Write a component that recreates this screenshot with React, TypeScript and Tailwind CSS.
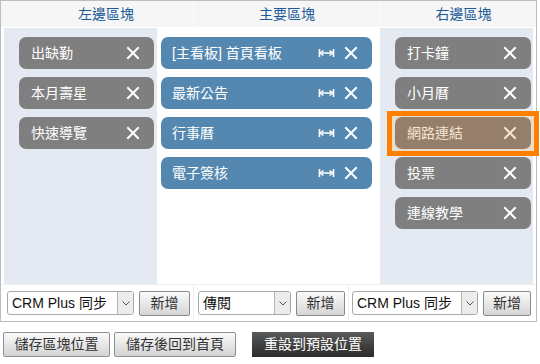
import React from 'react';

const font = { fontFamily: '"Liberation Sans", "Noto Sans CJK TC", sans-serif' };

function XIcon({ color = '#fff' }: { color?: string }) {
  return (
    <svg width="14" height="14" viewBox="0 0 14 14" className="shrink-0">
      <path d="M2 2 L12 12 M12 2 L2 12" stroke={color} strokeWidth="2" strokeLinecap="square" />
    </svg>
  );
}

function WidthIcon() {
  return (
    <svg width="17" height="12" viewBox="0 0 17 12" className="shrink-0">
      <path d="M1.5 2 V10 M15.5 2 V10 M2 6 H15" stroke="#fff" strokeWidth="1.6" />
      <path d="M2 6 L5.5 3.5 M2 6 L5.5 8.5 M15 6 L11.5 3.5 M15 6 L11.5 8.5" stroke="#fff" strokeWidth="1.4" />
    </svg>
  );
}

function SideItem({ label }: { label: string }) {
  return (
    <div className="h-[32px] rounded-[7px] bg-[#7f7f7f] flex items-center justify-between pl-[12px] pr-[14px] text-white text-[14px]">
      <span>{label}</span>
      <XIcon />
    </div>
  );
}

function MainItem({ label }: { label: string }) {
  return (
    <div className="h-[32px] rounded-[7px] bg-[#5588b0] flex items-center justify-between pl-[11px] pr-[14px] text-white text-[14px]">
      <span>{label}</span>
      <div className="flex items-center gap-[9px]">
        <WidthIcon />
        <XIcon />
      </div>
    </div>
  );
}

function Select({ label, width }: { label: string; width: string }) {
  return (
    <div className={`${width} h-[24px] flex border border-[#a9a9a9] rounded-[3px] bg-white text-[14px] text-[#111] overflow-hidden`}>
      <div className="flex-1 flex items-center pl-[4px] whitespace-nowrap">{label}</div>
      <div className="w-[16px] border-l border-[#b5b5b5] bg-[#ececec] flex items-center justify-center">
        <svg width="8" height="5" viewBox="0 0 8 5">
          <path d="M0.5 0.5 L4 4 L7.5 0.5" stroke="#555" fill="none" strokeWidth="1" />
        </svg>
      </div>
    </div>
  );
}

function AddButton({ width }: { width: string }) {
  return (
    <button className={`${width} h-[25px] border border-[#8a8a8a] rounded-[2px] bg-gradient-to-b from-[#fbfbfb] to-[#d5d5d5] text-[14px] text-[#333]`}>
      新增
    </button>
  );
}

export default function App() {
  return (
    <div className="w-[540px] h-[364px] bg-white" style={font}>
      <div className="w-[537px] border border-[#bdbdbd]">
        {/* Header */}
        <div className="flex h-[26px] bg-[#f6f6f6] text-[14px] text-[#1c5b9a]">
          <div className="w-[192px] flex items-center justify-center pl-[18px]">左邊區塊</div>
          <div className="w-[187px] flex items-center justify-center border-l border-[#fbfbfb]">主要區塊</div>
          <div className="flex-1 flex items-center justify-center border-l border-[#fbfbfb] pl-[10px]">右邊區塊</div>
        </div>

        {/* Columns */}
        <div className="flex pl-[3px] pr-[3px] pt-[1px] gap-[1px]">
          <div className="w-[153px] h-[256px] bg-[#e5eaf2] pt-[9px] pl-[15px] pr-[3px] flex flex-col gap-[8px]">
            <SideItem label="出缺勤" />
            <SideItem label="本月壽星" />
            <SideItem label="快速導覽" />
          </div>
          <div className="w-[221px] h-[256px] bg-white pt-[9px] pl-[3px] pr-[7px] flex flex-col gap-[8px]">
            <MainItem label="[主看板] 首頁看板" />
            <MainItem label="最新公告" />
            <MainItem label="行事曆" />
            <MainItem label="電子簽核" />
          </div>
          <div className="w-[153px] h-[256px] bg-[#e5eaf2] pt-[9px] pl-[15px] pr-[2px] flex flex-col gap-[8px]">
            <SideItem label="打卡鐘" />
            <SideItem label="小月曆" />
            <div className="relative">
              <div className="absolute -left-[8px] -right-[8px] -top-[6px] -bottom-[7px] border-[5px] border-[#ff8000] bg-[#ecdcca]" />
              <div className="relative h-[32px] rounded-[7px] bg-[#957f6a] flex items-center justify-between pl-[12px] pr-[14px] text-[#f6e4d2] text-[14px]">
                <span>網路連結</span>
                <XIcon color="#f6e4d2" />
              </div>
            </div>
            <SideItem label="投票" />
            <SideItem label="連線教學" />
          </div>
        </div>

        {/* Footer selects */}
        <div className="flex h-[37px] items-center border-t border-[#f0f0f0]">
          <div className="w-[192px] flex items-center gap-[5px] pl-[6px] h-full">
            <Select label="CRM Plus 同步" width="w-[127px]" />
            <AddButton width="w-[51px]" />
          </div>
          <div className="w-[155px] flex items-center gap-[5px] pl-[4px] h-full border-l border-[#f0f0f0]">
            <Select label="傳閱" width="w-[93px]" />
            <AddButton width="w-[49px]" />
          </div>
          <div className="flex-1 flex items-center gap-[5px] pl-[3px] h-full border-l border-[#f0f0f0]">
            <Select label="CRM Plus 同步" width="w-[126px]" />
            <AddButton width="w-[48px]" />
          </div>
        </div>
      </div>

      {/* Bottom buttons */}
      <div className="flex items-center pl-[3px] pt-[10px] text-[14px]">
        <button className="w-[107px] h-[25px] border border-[#8f8f8f] rounded-[2px] bg-gradient-to-b from-[#fbfbfb] to-[#d3d3d3] text-[#333]">
          儲存區塊位置
        </button>
        <button className="ml-[4px] w-[122px] h-[25px] border border-[#8f8f8f] rounded-[2px] bg-gradient-to-b from-[#fbfbfb] to-[#d3d3d3] text-[#333]">
          儲存後回到首頁
        </button>
        <button className="ml-[16px] w-[122px] h-[25px] bg-gradient-to-b from-[#5a5a5a] to-[#2b2b2b] text-white">
          重設到預設位置
        </button>
      </div>
    </div>
  );
}
